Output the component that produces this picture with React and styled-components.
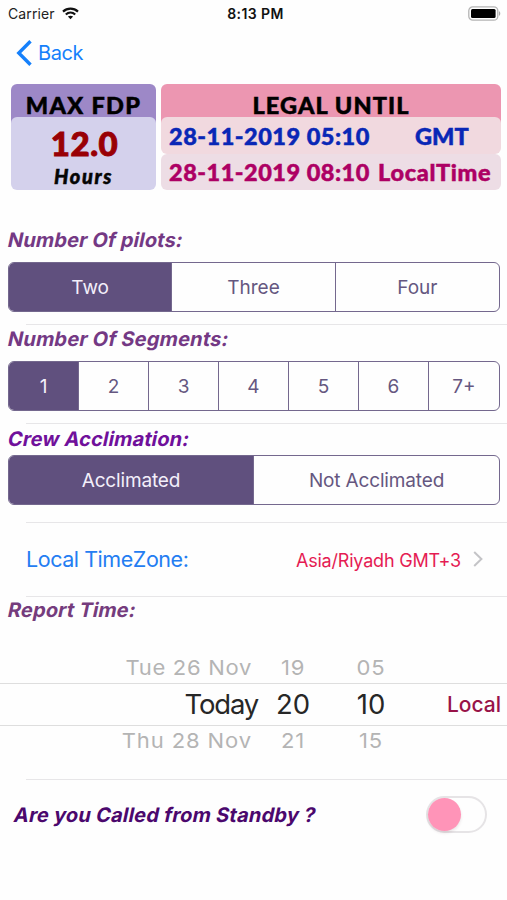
import React, { useState } from "react";
import styled, { createGlobalStyle } from "styled-components";

const GlobalStyle = createGlobalStyle`
  *, *::before, *::after { box-sizing: border-box; }
  body {
    margin: 0;
    background: #fefefe;
    font-family: Inter, "Liberation Sans", sans-serif;
  }
  button { font: inherit; padding: 0; border: 0; background: none; cursor: pointer; }
`;

const Screen = styled.main`
  width: 507px;
  height: 900px;
  display: flex;
  flex-direction: column;
  overflow: hidden;
  white-space: nowrap;
`;

const StatusBar = styled.header`
  height: 27px;
  padding: 0 6px 0 8px;
  display: grid;
  grid-template-columns: 1fr auto 1fr;
  align-items: center;
  color: #222;
  font-size: 14px;
`;

const Carrier = styled.div`
  display: flex;
  align-items: center;
  gap: 7px;
  letter-spacing: 0.12px;
`;

const Clock = styled.time`
  color: #111;
  font-weight: 600;
  letter-spacing: 0.4px;
  padding-left: 2px;
`;

const BatterySlot = styled.div`
  display: flex;
  justify-content: flex-end;
`;

const NavBar = styled.nav`
  height: 57px;
  padding: 4px 0 0 16px;
  display: flex;
  align-items: flex-start;
`;

const BackButton = styled.button`
  height: 44px;
  display: flex;
  align-items: center;
  gap: 5px;
  color: #1580fb;
  font-size: 20px;
  letter-spacing: -0.4px;
`;

const Summary = styled.section`
  height: 106px;
  padding: 0 6px 0 11px;
  display: grid;
  grid-template-columns: 145px 340px;
  gap: 5px;
  font-family: Lato, sans-serif;
  font-weight: 900;
  -webkit-text-stroke: 0.5px currentColor;
`;

const Card = styled.article`
  display: flex;
  flex-direction: column;
  border-radius: 6px;
  background: linear-gradient(${(p) => p.$tone} 0 39px, transparent 39px);
`;

const CardTitle = styled.h2`
  height: 33px;
  margin: 0;
  padding-top: 6px;
  text-align: center;
  font-size: 23.5px;
  font-weight: 900;
  line-height: 30px;
  letter-spacing: ${(p) => p.$spacing};
  color: #000;
`;

const FdpBody = styled.div`
  flex: 1;
  display: flex;
  flex-direction: column;
  align-items: center;
  border-radius: 6px;
  background: #d4d1ec;
`;

const FdpValue = styled.strong`
  margin: 8px 0 2px 2px;
  color: #990005;
  font-size: 33px;
  line-height: 36px;
  font-weight: 900;
  letter-spacing: 0.6px;
  -webkit-text-stroke-width: 1px;
`;

const FdpUnit = styled.em`
  color: #050505;
  font-size: 20px;
  line-height: 26px;
  letter-spacing: 1.6px;
`;

const LimitRow = styled.div`
  height: ${(p) => p.$height};
  padding-left: 8px;
  display: grid;
  grid-template-columns: ${(p) => p.$columns};
  align-items: center;
  border-radius: 6px;
  color: ${(p) => p.$color};
  background: ${(p) => p.$background};
  font-size: 23.5px;
`;

const LimitDate = styled.span`
  letter-spacing: 0.5px;
`;

const LimitZone = styled.span`
  letter-spacing: ${(p) => p.$spacing};
`;

const Section = styled.section`
  height: ${(p) => p.$height};
  padding: ${(p) => p.$top} 7px 0 8px;
`;

const Label = styled.h3`
  width: max-content;
  height: 24px;
  margin: 0 0 ${(p) => p.$gap || "0"};
  color: ${(p) => p.$color};
  font-size: 20px;
  line-height: 26px;
  font-weight: 650;
  letter-spacing: ${(p) => p.$spacing || "0.15px"};
  transform: skewX(-12deg);
  transform-origin: 0 60%;
`;

const Divider = styled.hr`
  width: 481px;
  height: 1px;
  margin: 0 0 0 26px;
  border: 0;
  flex: none;
  background: #e7e6e8;
`;

const SegmentedControl = styled.div`
  height: 50px;
  display: grid;
  grid-template-columns: repeat(${(p) => p.$count}, 1fr);
  border: 1px solid #74688e;
  border-radius: 6px;
  overflow: hidden;
`;

const Segment = styled.button`
  display: grid;
  place-items: center;
  color: ${(p) => (p.$active ? "#f3effa" : "#655780")};
  background: ${(p) => (p.$active ? "#60507e" : "transparent")};
  font-size: 19px;
  letter-spacing: ${(p) => p.$spacing || "0"};
  &:not(:last-child) { border-right: 1px solid #74688e; }
`;

const TimeZoneRow = styled.button`
  width: 100%;
  height: 73px;
  padding: 0 24px 2px 26px !important;
  display: flex;
  align-items: center;
`;

const TimeZoneLabel = styled.span`
  color: #247df2;
  font-size: 21.5px;
  letter-spacing: -0.45px;
`;

const TimeZoneValue = styled.span`
  margin: 3px 12px 0 auto;
  color: #e51c53;
  font-size: 18px;
  letter-spacing: -0.2px;
`;

const Picker = styled.div`
  height: 155px;
  padding-top: 26px;
  display: flex;
  flex-direction: column;
`;

const PickerRow = styled.div`
  height: ${(p) => (p.$selected ? "43px" : "33px")};
  padding: ${(p) => (p.$selected ? "0 6px 2px 0" : "2px 6px 0 0")};
  display: grid;
  grid-template-columns: 259px 68px 88px 1fr;
  align-items: center;
  color: ${(p) => (p.$selected ? "#272727" : "#b4b4b4")};
  font-size: ${(p) => (p.$selected ? "27.5px" : "22px")};
  border: solid #dedede;
  border-width: ${(p) => (p.$selected ? "1px 0" : "0")};
  &:last-child { padding-top: 0; height: 30px; }
`;

const PickerDay = styled.span`
  text-align: right;
  padding-right: ${(p) => (p.$selected ? "1px" : "7px")};
  letter-spacing: ${(p) => p.$spacing};
  transform: scaleY(${(p) => (p.$selected ? 1 : 0.93)});
`;

const PickerNumber = styled.span`
  text-align: center;
  letter-spacing: ${(p) => (p.$selected ? "0" : "0.8px")};
  transform: scaleY(${(p) => (p.$selected ? 1 : 0.93)});
`;

const PickerZone = styled.span`
  padding-top: 2px;
  text-align: right;
  color: #981348;
  font-size: 21px;
  font-weight: 500;
`;

const StandbyRow = styled.section`
  height: 71px;
  padding: 0 20px 3px 14px;
  display: flex;
  align-items: center;
  justify-content: space-between;
`;

const Toggle = styled.button`
  width: 61px;
  height: 37px;
  display: flex;
  align-items: center;
  justify-content: ${(p) => (p.$on ? "flex-end" : "flex-start")};
  border: 2px solid #e6e4e6 !important;
  border-radius: 19px;
`;

const Knob = styled.span`
  width: 33px;
  height: 33px;
  border-radius: 50%;
  background: #ff94b8;
  box-shadow: 0 2px 3px rgba(80, 30, 50, 0.12);
`;

const WifiIcon = () => (
  <svg width="17" height="13" viewBox="0 0 17 13" fill="none" stroke="#111" strokeWidth="2.2">
    <path d="M1 4.6C5.2.7 11.8.7 16 4.6" />
    <path d="M3.8 7.5C6.5 5 10.5 5 13.2 7.5" />
    <path d="M8.5 12.3 5.9 9.6C7.3 8.3 9.7 8.3 11.1 9.6Z" fill="#111" stroke="none" />
  </svg>
);

const BatteryIcon = () => (
  <svg width="33" height="15" viewBox="0 0 33 15">
    <rect x=".8" y=".8" width="29" height="13.4" rx="4" fill="#fff" stroke="#b4b4b4" strokeWidth="1.3" />
    <rect x="3" y="3" width="24.6" height="9" rx="1.5" fill="#000" />
    <path d="M31 5.2c1.7.6 1.7 4 0 4.6Z" fill="#aaa" />
  </svg>
);

const BackIcon = () => (
  <svg width="17" height="26" viewBox="0 0 17 26" fill="none" stroke="#1580fb" strokeWidth="3.4">
    <path d="M14.5 1.2 2.8 13 14.5 24.8" />
  </svg>
);

const DisclosureIcon = () => (
  <svg width="10" height="16" viewBox="0 0 10 16" fill="none" stroke="#c4c4c7" strokeWidth="2">
    <path d="m1.2 1 7.2 7-7.2 7" />
  </svg>
);

function Segments({ options, initial = 0, spacing }) {
  const [active, setActive] = useState(initial);
  return (
    <SegmentedControl $count={options.length}>
      {options.map((option, index) => (
        <Segment
          key={option}
          type="button"
          $active={index === active}
          $spacing={spacing}
          onClick={() => setActive(index)}
        >
          {option}
        </Segment>
      ))}
    </SegmentedControl>
  );
}

const TIMES = [
  { day: "Tue 26 Nov", hour: "19", minute: "05", spacing: "0.7px" },
  { day: "Today", hour: "20", minute: "10", spacing: "-1.2px", selected: true },
  { day: "Thu 28 Nov", hour: "21", minute: "15", spacing: "0.9px" },
];

export default function App() {
  const [standby, setStandby] = useState(false);
  return (
    <Screen>
      <GlobalStyle />
      <StatusBar>
        <Carrier>Carrier <WifiIcon /></Carrier>
        <Clock>8:13 PM</Clock>
        <BatterySlot><BatteryIcon /></BatterySlot>
      </StatusBar>
      <NavBar>
        <BackButton type="button"><BackIcon />Back</BackButton>
      </NavBar>
      <Summary>
        <Card $tone="#9d88c7">
          <CardTitle $spacing="1.3px">MAX FDP</CardTitle>
          <FdpBody>
            <FdpValue>12.0</FdpValue>
            <FdpUnit>Hours</FdpUnit>
          </FdpBody>
        </Card>
        <Card $tone="#ec96b1">
          <CardTitle $spacing="1.1px">LEGAL UNTIL</CardTitle>
          <LimitRow $height="37px" $columns="246px 1fr" $color="#0927b6" $background="#f1d9df">
            <LimitDate>28-11-2019 05:10</LimitDate>
            <LimitZone $spacing="0">GMT</LimitZone>
          </LimitRow>
          <LimitRow $height="36px" $columns="209px 1fr" $color="#ad0064" $background="#eddde5">
            <LimitDate>28-11-2019 08:10</LimitDate>
            <LimitZone $spacing="0.7px">LocalTime</LimitZone>
          </LimitRow>
        </Card>
      </Summary>
      <Section $height="134px" $top="37px">
        <Label $color="#743984" $gap="11px">Number Of pilots:</Label>
        <Segments options={["Two", "Three", "Four"]} />
      </Section>
      <Divider />
      <Section $height="98px" $top="1px">
        <Label $color="#743984" $gap="11px" $spacing="0.2px">Number Of Segments:</Label>
        <Segments options={["1", "2", "3", "4", "5", "6", "7+"]} />
      </Section>
      <Divider />
      <Section $height="98px" $top="2px">
        <Label $color="#70109b" $gap="5px">Crew Acclimation:</Label>
        <Segments options={["Acclimated", "Not Acclimated"]} spacing="-0.15px" />
      </Section>
      <Divider />
      <TimeZoneRow type="button">
        <TimeZoneLabel>Local TimeZone:</TimeZoneLabel>
        <TimeZoneValue>Asia/Riyadh GMT+3</TimeZoneValue>
        <DisclosureIcon />
      </TimeZoneRow>
      <Divider />
      <Section $height="27px" $top="0">
        <Label $color="#753c7d">Report Time:</Label>
      </Section>
      <Picker>
        {TIMES.map(({ day, hour, minute, spacing, selected }) => (
          <PickerRow key={day} $selected={selected}>
            <PickerDay $selected={selected} $spacing={spacing}>{day}</PickerDay>
            <PickerNumber $selected={selected}>{hour}</PickerNumber>
            <PickerNumber $selected={selected}>{minute}</PickerNumber>
            {selected && <PickerZone>Local</PickerZone>}
          </PickerRow>
        ))}
      </Picker>
      <Divider />
      <StandbyRow>
        <Label as="span" $color="#4b086d" $spacing="0.22px">Are you Called from Standby ?</Label>
        <Toggle
          type="button"
          role="switch"
          aria-checked={standby}
          aria-label="Called from standby"
          $on={standby}
          onClick={() => setStandby(!standby)}
        >
          <Knob />
        </Toggle>
      </StandbyRow>
    </Screen>
  );
}
